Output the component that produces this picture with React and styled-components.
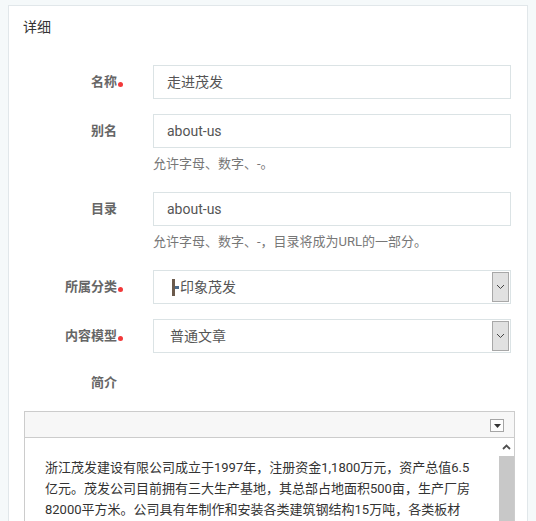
import React from "react";
import styled, { createGlobalStyle } from "styled-components";

const GlobalStyle = createGlobalStyle`
    html, body {
        margin: 0;
        overflow: hidden;
        background-color: #f5f9fa;
        font-family: "Roboto", "Noto Sans CJK SC", sans-serif;
    }
`;

const Page = styled.div`
    padding: 5px 8px 0;
`;

const Panel = styled.div`
    box-sizing: border-box;
    width: 520px;
    min-height: 540px;
    background-color: #fff;
    border: 1px solid #e1e7ea;
    padding: 0 15px;
`;

const Title = styled.h3`
    margin: 0 0 28px -1px;
    padding-top: 11px;
    font-size: 14px;
    font-weight: normal;
    line-height: 20px;
    color: #333;
`;

const Row = styled.div`
    display: flex;
    align-items: flex-start;
    margin-bottom: ${(p) => p.$gap ?? 15}px;
`;

const Label = styled.label`
    box-sizing: border-box;
    width: 99px;
    flex-shrink: 0;
    text-align: right;
    font-size: 13px;
    font-weight: bold;
    color: #666;
    line-height: ${(p) => p.$height ?? 34}px;
    padding-right: ${(p) => (p.$required ? 0 : 6)}px;
    white-space: nowrap;
`;

const Dot = styled.span`
    display: inline-block;
    width: 5px;
    height: 5px;
    margin-left: 1px;
    border-radius: 50%;
    background-color: #f2393a;
    vertical-align: -1px;
`;

const Field = styled.div`
    flex: 1;
    margin-left: 30px;
    margin-right: 1px;
`;

const Input = styled.div`
    box-sizing: border-box;
    height: 34px;
    border: 1px solid #dbe3e5;
    padding: 0 13px;
    font-size: 14px;
    line-height: 32px;
    color: #555;
`;

const Help = styled.div`
    margin: 6px 0 3px;
    font-size: 13px;
    line-height: 20px;
    color: #777;
`;

const Select = styled.div`
    box-sizing: border-box;
    display: flex;
    align-items: stretch;
    height: 34px;
    border: 1px solid #dbe3e5;
    padding: 1px 1px 1px 0;
    font-size: 14px;
    color: #555;
`;

const SelectText = styled.span`
    flex: 1;
    line-height: 30px;
    padding-left: ${(p) => p.$indent ?? 16}px;
`;

const Branch = styled.span`
    display: inline-block;
    position: relative;
    width: 3px;
    height: 17px;
    margin-right: 5px;
    background-color: #6b5a4c;
    vertical-align: -4px;
    &::after {
        content: "";
        position: absolute;
        left: 3px;
        top: 7px;
        width: 4px;
        height: 3px;
        background-color: #4a6a8c;
    }
`;

const SelectButton = styled.span`
    box-sizing: border-box;
    width: 17px;
    display: flex;
    align-items: center;
    justify-content: center;
    background-color: #e1e1e1;
    border: 1px solid #a8a8a8;
`;

const Editor = styled.div`
    margin-right: -3px;
    border: 1px solid #cccccc;
    background-color: #fff;
`;

const Toolbar = styled.div`
    display: flex;
    justify-content: flex-end;
    align-items: center;
    height: 25px;
    background-color: #f7f7f7;
    border-bottom: 1px solid #cccccc;
    padding-right: 10px;
`;

const ToolButton = styled.span`
    box-sizing: border-box;
    width: 14px;
    height: 13px;
    margin-top: 2px;
    border: 1px solid #a5a5a5;
    background-color: #fdfdfd;
    display: flex;
    align-items: center;
    justify-content: center;
`;

const EditorBody = styled.div`
    display: flex;
    height: 200px;
`;

const Content = styled.div`
    flex: 1;
    padding: 19px 22px 0 20px;
    font-size: 13px;
    line-height: 21px;
    color: #333;
`;

const Scrollbar = styled.div`
    width: 15px;
    display: flex;
    flex-direction: column;
    background-color: #f1f1f1;
`;

const ScrollArrow = styled.div`
    height: 18px;
    display: flex;
    align-items: center;
    justify-content: center;
    background-color: #fff;
`;

const ScrollThumb = styled.div`
    flex: 1;
    background-color: #c8c8c8;
`;

const Chevron = ({ up }) => (
    <svg width="9" height="6" viewBox="0 0 9 6">
        <path
            d={up ? "M1 5 L4.5 1.5 L8 5" : "M1 1 L4.5 4.5 L8 1"}
            fill="none"
            stroke={up ? "#505050" : "#444"}
            strokeWidth={up ? 1.8 : 1}
        />
    </svg>
);

const Triangle = () => (
    <svg width="7" height="4" viewBox="0 0 7 4">
        <path d="M0 0 L7 0 L3.5 4 Z" fill="#333" />
    </svg>
);

const App = () => {
    return (
        <Page>
            <GlobalStyle />
            <Panel>
                <Title>详细</Title>

                <Row>
                    <Label $required>
                        名称
                        <Dot />
                    </Label>
                    <Field>
                        <Input>走进茂发</Input>
                    </Field>
                </Row>

                <Row>
                    <Label>别名</Label>
                    <Field>
                        <Input>about-us</Input>
                        <Help>允许字母、数字、-。</Help>
                    </Field>
                </Row>

                <Row>
                    <Label>目录</Label>
                    <Field>
                        <Input>about-us</Input>
                        <Help>允许字母、数字、-，目录将成为URL的一部分。</Help>
                    </Field>
                </Row>

                <Row>
                    <Label $required>
                        所属分类
                        <Dot />
                    </Label>
                    <Field>
                        <Select>
                            <SelectText $indent={18}>
                                <Branch />
                                印象茂发
                            </SelectText>
                            <SelectButton>
                                <Chevron />
                            </SelectButton>
                        </Select>
                    </Field>
                </Row>

                <Row>
                    <Label $required>
                        内容模型
                        <Dot />
                    </Label>
                    <Field>
                        <Select>
                            <SelectText $indent={16}>普通文章</SelectText>
                            <SelectButton>
                                <Chevron />
                            </SelectButton>
                        </Select>
                    </Field>
                </Row>

                <Row $gap={13}>
                    <Label $height={30}>简介</Label>
                </Row>

                <Editor>
                    <Toolbar>
                        <ToolButton>
                            <Triangle />
                        </ToolButton>
                    </Toolbar>
                    <EditorBody>
                        <Content>
                            浙江茂发建设有限公司成立于1997年，注册资金1,1800万元，资产总值6.5亿元。茂发公司目前拥有三大生产基地，其总部占地面积500亩，生产厂房82000平方米。公司具有年制作和安装各类建筑钢结构15万吨，各类板材10000000平方米的生产能力。
                        </Content>
                        <Scrollbar>
                            <ScrollArrow>
                                <Chevron up />
                            </ScrollArrow>
                            <ScrollThumb />
                        </Scrollbar>
                    </EditorBody>
                </Editor>
            </Panel>
        </Page>
    );
};

export default App;
